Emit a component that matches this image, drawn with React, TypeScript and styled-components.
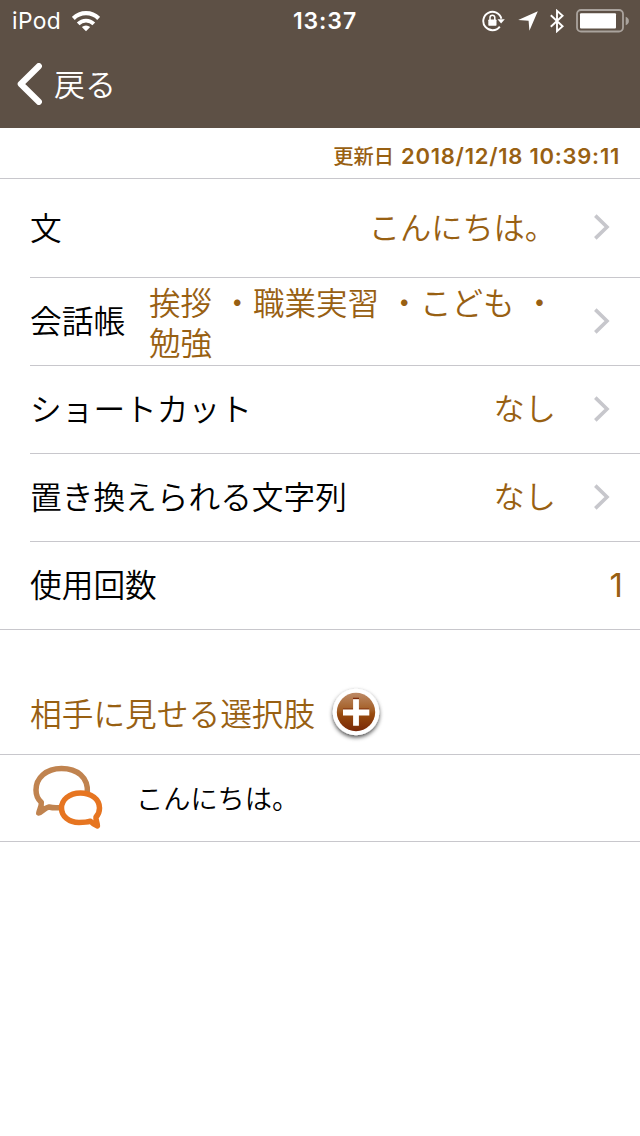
import React from 'react';
import styled, { createGlobalStyle } from 'styled-components';

const GlobalStyle = createGlobalStyle`
  * { box-sizing: border-box; }
  body {
    margin: 0;
    background: #fff;
    font-family: Inter, 'Noto Sans CJK JP', sans-serif;
  }
`;

const JP = "'Noto Sans CJK JP', sans-serif";
const brown = '#986012';
const line = '#c8c7cc';

const Screen = styled.div`
  width: 640px;
  min-height: 1136px;
  background: #fff;
  overflow: hidden;
`;

const Header = styled.header`
  height: 128px;
  background: #5d5045;
  color: #fff;
`;

const StatusBar = styled.div`
  height: 40px;
  padding: 0 11px 0 12px;
  display: grid;
  grid-template-columns: 1fr auto 1fr;
  align-items: center;
`;

const Carrier = styled.div`
  display: flex;
  align-items: center;
  gap: 11px;
  font-size: 22.8px;
  line-height: 40px;
  letter-spacing: 0.4px;
`;

const Clock = styled.div`
  font-size: 23px;
  font-weight: 600;
  line-height: 42px;
  letter-spacing: 0.9px;
  padding-left: 9px;
`;

const Indicators = styled.div`
  display: flex;
  justify-content: flex-end;
  align-items: center;
  gap: 12px;
`;

const NavBar = styled.nav`
  height: 88px;
  padding-left: 17px;
  display: flex;
  align-items: center;
`;

const BackLabel = styled.span`
  margin: -3px 0 0 12px;
  font-family: ${JP};
  font-weight: 350;
  font-size: 31px;
  line-height: 40px;
`;

const Updated = styled.div`
  height: 51px;
  padding: 5px 20px 0 0;
  border-bottom: 1px solid ${line};
  color: ${brown};
  font-size: 22px;
  font-weight: 600;
  line-height: 44px;
  letter-spacing: 0.75px;
  text-align: right;
`;

const UpdatedLabel = styled.span`
  font-family: ${JP};
  font-weight: 500;
  font-size: 20.3px;
  letter-spacing: 0;
  margin-right: 7px;
`;

const List = styled.div`
  border-bottom: 1px solid ${line};
`;

const Row = styled.div<{ $h?: number }>`
  height: ${p => p.$h ?? 88}px;
  margin-left: 30px;
  padding: 0 30px 2px 0;
  display: flex;
  align-items: center;
  border-bottom: 1px solid ${line};
  &:last-child {
    height: 87px;
    padding-right: 17px;
    border-bottom: 0;
  }
`;

const Label = styled.span`
  flex: none;
  margin-top: -3px;
  font-family: ${JP};
  font-weight: 350;
  font-size: 31.7px;
  line-height: 40px;
  color: #000;
`;

const Value = styled.span`
  flex: 1;
  margin: -3px 38px 0 0;
  font-family: ${JP};
  font-weight: 350;
  font-size: 31.2px;
  line-height: 40px;
  color: ${brown};
  text-align: right;
`;

const Books = styled(Value)`
  margin: 1px 30px 0 24px;
  font-size: 31.5px;
  word-spacing: 2.4px;
  text-align: left;
`;

const Count = styled.span`
  margin-left: auto;
  font-size: 33px;
  line-height: 40px;
  color: ${brown};
`;

const SectionHead = styled.div`
  height: 125px;
  padding: 43px 0 0 30px;
  display: flex;
  align-items: center;
  border-bottom: 1px solid ${line};
`;

const SectionTitle = styled(Label)`
  color: ${brown};
`;

const AddButton = styled.button`
  width: 60px;
  height: 60px;
  margin-left: 11px;
  padding: 0;
  border: 0;
  background: none;
`;

const Choice = styled.div`
  height: 87px;
  padding: 0 0 3px 30px;
  display: flex;
  align-items: center;
  border-bottom: 1px solid ${line};
`;

const ChoiceText = styled.span`
  margin-left: 30px;
  font-family: ${JP};
  font-weight: 350;
  font-size: 27.2px;
  line-height: 40px;
  color: #000;
`;

const Svg = styled.svg`
  display: block;
  flex: none;
`;

const Wifi = () => (
  <Svg width="28" height="21" viewBox="0 0 28 21" fill="none" stroke="#fff" strokeWidth="4.2">
    <path d="M1.3 7.4A18 18 0 0 1 26.7 7.4" />
    <path d="M6.2 12.8A11 11 0 0 1 21.8 12.8" strokeWidth="3.8" />
    <path d="M14 20.3L9.8 16.1A6 6 0 0 1 18.2 16.1Z" fill="#fff" stroke="none" />
  </Svg>
);

const RotationLock = () => (
  <Svg width="24" height="22" viewBox="0 0 24 22">
    <path d="M17.8 16.6A9.2 9.2 0 1 1 19.4 8.8" fill="none" stroke="#fff" strokeWidth="1.9" />
    <path d="M15.5 9.2h7.3l-3.7 4.4z" fill="#fff" />
    <rect x="6.3" y="9.5" width="8.2" height="6.3" rx="0.7" fill="#fff" />
    <path d="M8 10V7.6a2.4 2.4 0 0 1 4.8 0V10" fill="none" stroke="#fff" strokeWidth="1.5" />
  </Svg>
);

const Location = () => (
  <Svg width="20" height="20" viewBox="0 0 20 20">
    <path d="M19.8 .2L11.4 19.8 10.6 9.8.2 9z" fill="#fff" />
  </Svg>
);

const Bluetooth = () => (
  <Svg width="14" height="24" viewBox="0 0 14 24" fill="none" stroke="#fff" strokeWidth="1.9">
    <path d="M.8 6.3L12.6 17.2 7 22.2V1.8L12.6 6.8.8 17.7" />
  </Svg>
);

const Battery = () => (
  <Svg width="53" height="24" viewBox="0 0 53 24">
    <rect x="1" y="1" width="46" height="21.5" rx="4" fill="none" stroke="#aaa39d" strokeWidth="1.8" />
    <path d="M49.7 7.7q3.2 1.2 3.2 4.3t-3.2 4.3z" fill="#aaa39d" />
    <rect x="4" y="4.2" width="36" height="15.3" rx="1" fill="#fff" />
  </Svg>
);

const BackArrow = () => (
  <Svg width="25" height="42" viewBox="0 0 25 42">
    <path d="M21.8 3.2L3.8 21 21.8 38.8" fill="none" stroke="#fff" strokeWidth="6.2" strokeLinecap="round" strokeLinejoin="round" />
  </Svg>
);

const Chevron = () => (
  <Svg width="16" height="26" viewBox="0 0 16 26">
    <path d="M1.3 1.6L13 13 1.3 24.4" fill="none" stroke="#c7c7cc" strokeWidth="3.6" />
  </Svg>
);

const Plus = () => (
  <Svg width="60" height="60" viewBox="0 0 60 60">
    <defs>
      <linearGradient id="copper" x1="0" y1="0" x2="0" y2="1">
        <stop offset="0" stopColor="#bd8a66" />
        <stop offset="0.45" stopColor="#a35e26" />
        <stop offset="0.55" stopColor="#984b0e" />
        <stop offset="1" stopColor="#782808" />
      </linearGradient>
      <filter id="drop" x="-20%" y="-20%" width="150%" height="150%">
        <feDropShadow dx="0" dy="2.2" stdDeviation="2" floodColor="#000" floodOpacity="0.7" />
      </filter>
    </defs>
    <circle cx="30" cy="28" r="23.3" fill="#fff" filter="url(#drop)" />
    <circle cx="30" cy="28" r="19.2" fill="url(#copper)" />
    <path d="M27 14.5h6" stroke="#7c2908" strokeWidth="1.5" />
    <path d="M17 25h10M33 25h10" stroke="#7c2908" strokeWidth="1" />
    <path d="M30 15.2v26.5M17 28.5h26.3" stroke="#fff" strokeWidth="5.8" />
  </Svg>
);

const Bubbles = () => (
  <Svg width="76" height="66" viewBox="0 0 76 66" fill="none" strokeWidth="5.5" strokeLinejoin="round">
    <path d="M57.4 29C58.4 13 47 4.5 31.5 4.5C16 4.5 6 14 6 26C6 32 8 35.5 11.3 38.3C11.8 42 9.5 45.5 8.8 49C12 48 15 43.5 19 43C23 44 27 44 31 43.5" stroke="#c0834f" />
    <path d="M66 53C69 50 69.5 47 69.5 44C69.5 35 61 29 50.5 29C39 29 31.5 36 31.5 44C31.5 52.5 39 58.5 49 58.5C54 58.5 57 58.3 60.5 57.2C62.5 59.5 65 61 67.4 62C67.4 58.5 65.5 55.5 66 53Z" fill="#fff" stroke="#e67521" />
  </Svg>
);

export default function App() {
  return (
    <Screen>
      <GlobalStyle />
      <Header>
        <StatusBar>
          <Carrier>iPod<Wifi /></Carrier>
          <Clock>13:37</Clock>
          <Indicators>
            <RotationLock />
            <Location />
            <Bluetooth />
            <Battery />
          </Indicators>
        </StatusBar>
        <NavBar>
          <BackArrow />
          <BackLabel>戻る</BackLabel>
        </NavBar>
      </Header>
      <Updated><UpdatedLabel>更新日</UpdatedLabel>2018/12/18 10:39:11</Updated>
      <List>
        <Row $h={99}><Label>文</Label><Value>こんにちは。</Value><Chevron /></Row>
        <Row><Label>会話帳</Label><Books>挨拶 ・職業実習 ・こども ・<br />勉強</Books><Chevron /></Row>
        <Row><Label>ショートカット</Label><Value>なし</Value><Chevron /></Row>
        <Row><Label>置き換えられる文字列</Label><Value>なし</Value><Chevron /></Row>
        <Row><Label>使用回数</Label><Count>1</Count></Row>
      </List>
      <SectionHead>
        <SectionTitle>相手に見せる選択肢</SectionTitle>
        <AddButton aria-label="追加"><Plus /></AddButton>
      </SectionHead>
      <Choice><Bubbles /><ChoiceText>こんにちは。</ChoiceText></Choice>
    </Screen>
  );
}
